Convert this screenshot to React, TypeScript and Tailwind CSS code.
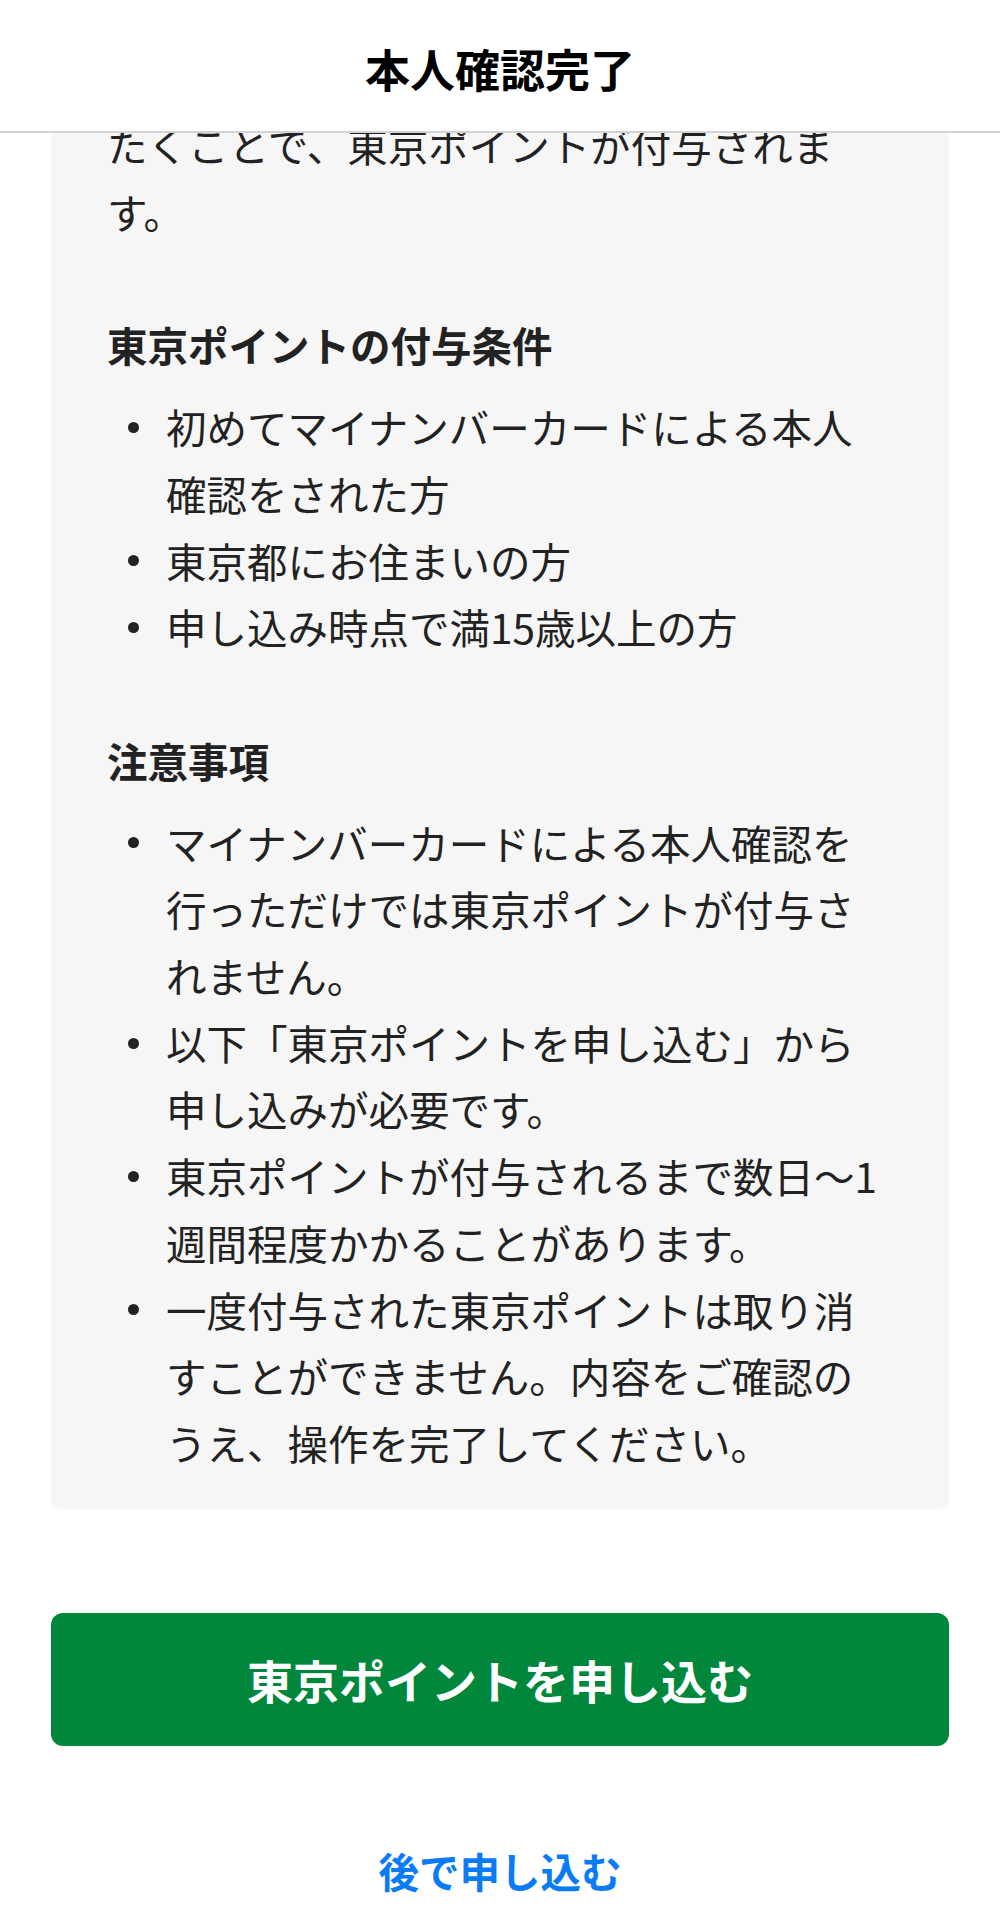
const conditions = [
  "初めてマイナンバーカードによる本人確認をされた方",
  "東京都にお住まいの方",
  "申し込み時点で満15歳以上の方",
];

const notes = [
  "マイナンバーカードによる本人確認を行っただけでは東京ポイントが付与されません。",
  "以下「東京ポイントを申し込む」から申し込みが必要です。",
  "東京ポイントが付与されるまで数日〜1週間程度かかることがあります。",
  "一度付与された東京ポイントは取り消すことができません。内容をご確認のうえ、操作を完了してください。",
];

function BulletList({ items, className }: { items: string[]; className?: string }) {
  return (
    <ul className={className}>
      {items.map((item) => (
        <li key={item} className="flex pr-[8px]">
          <span className="flex h-[66.7px] w-[59px] shrink-0 items-center">
            <span className="ml-[21px] size-[11px] rounded-full bg-[#222]" />
          </span>
          <span>{item}</span>
        </li>
      ))}
    </ul>
  );
}

export default function App() {
  return (
    <div className="relative min-h-[1923px] bg-white font-['Noto_Sans_CJK_JP','Noto_Sans',sans-serif]">
      <header className="absolute inset-x-0 top-0 z-10 flex h-[133px] items-center justify-center border-b-2 border-[#d3d3d3] bg-white pt-[6px]">
        <h1 className="text-[45px] font-bold leading-none text-black">本人確認完了</h1>
      </header>

      <main className="px-[51px]">
        <section className="rounded-b-[10px] bg-[#f6f6f6] pb-[32px] pl-[56px] pr-[56px] pt-[112px] text-[40.5px] leading-[66.7px] text-[#222]">
          <p className="mb-[67px]">たくことで、東京ポイントが付与されます。</p>

          <h2 className="mb-[15px] font-bold">東京ポイントの付与条件</h2>
          <BulletList items={conditions} className="mb-[67px]" />

          <h2 className="mb-[15px] font-bold">注意事項</h2>
          <BulletList items={notes} />
        </section>

        <button className="mt-[104px] flex h-[133px] w-full items-center justify-center rounded-[12px] bg-[#00873c] text-[46px] font-bold text-white">
          東京ポイントを申し込む
        </button>

        <div className="mt-[92px] flex justify-center">
          <button className="text-[40.5px] font-bold leading-[66.7px] text-[#0a7bf5]">後で申し込む</button>
        </div>
      </main>
    </div>
  );
}
